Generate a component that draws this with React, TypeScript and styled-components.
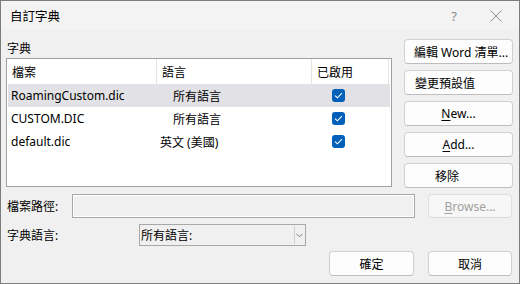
import styled, { createGlobalStyle } from 'styled-components';

const GlobalStyle = createGlobalStyle`
  html, body {
    margin: 0;
    padding: 0;
    background: #f0f0f0;
  }

  * {
    box-sizing: border-box;
  }
`;

const dictionaries = [
  { name: 'RoamingCustom.dic', language: '所有語言', indent: 16, selected: true },
  { name: 'CUSTOM.DIC', language: '所有語言', indent: 16, selected: false },
  { name: 'default.dic', language: '英文 (美國)', indent: 3, selected: false },
];

function Check() {
  return (
    <CheckBox>
      <svg width="9" height="7" viewBox="0 0 9 7">
        <path d="M1 3.6 L3.4 5.8 L8 1.2" fill="none" stroke="#fff" strokeWidth="1.1" />
      </svg>
    </CheckBox>
  );
}

function App() {
  return (
    <>
      <GlobalStyle />
      <Window>
        <TitleBar>
          <Title>自訂字典</Title>
          <TitleControls>
            <Help>?</Help>
            <svg width="12" height="12" viewBox="0 0 12 12">
              <path d="M0.5 0.5 L11.5 11.5 M11.5 0.5 L0.5 11.5" stroke="#8a8a8a" strokeWidth="1" />
            </svg>
          </TitleControls>
        </TitleBar>

        <Body>
          <Top>
            <ListColumn>
              <Label>字典</Label>
              <List>
                <HeaderRow>
                  <HeaderCell>檔案</HeaderCell>
                  <HeaderCell>語言</HeaderCell>
                  <HeaderCell>已啟用</HeaderCell>
                </HeaderRow>
                {dictionaries.map(({ name, language, indent, selected }) => (
                  <Row key={name} $selected={selected}>
                    <Cell $indent={3}>{name}</Cell>
                    <Cell $indent={indent}>{language}</Cell>
                    <CheckCell>
                      <Check />
                    </CheckCell>
                  </Row>
                ))}
              </List>
            </ListColumn>

            <SideButtons>
              <Button $align="left" $indent={9}>編輯 Word 清單...</Button>
              <Button $align="left" $indent={10}>變更預設值</Button>
              <Button>
                <u>N</u>ew...
              </Button>
              <Button>
                <u>A</u>dd...
              </Button>
              <Button $align="left" $indent={30}>移除</Button>
            </SideButtons>
          </Top>

          <PathRow>
            <Label>檔案路徑:</Label>
            <PathInput />
            <Button $disabled $width={84}>
              <u>B</u>rowse...
            </Button>
          </PathRow>

          <LanguageRow>
            <Label>字典語言:</Label>
            <Select>
              <SelectText>所有語言:</SelectText>
              <SelectArrow>
                <svg width="7" height="5" viewBox="0 0 7 5">
                  <path d="M0.5 0.8 L3.5 3.8 L6.5 0.8" fill="none" stroke="#7a7a7a" strokeWidth="1" />
                </svg>
              </SelectArrow>
            </Select>
          </LanguageRow>

          <Footer>
            <Button $width={85}>確定</Button>
            <Button $width={84}>取消</Button>
          </Footer>
        </Body>
      </Window>
    </>
  );
}

export default App;

const Window = styled.div`
  display: flex;
  flex-direction: column;
  width: 520px;
  height: 284px;
  border: 1px solid #7c7c7c;
  background-color: #f0f0f0;
  font-family: 'Noto Sans', 'Noto Sans CJK TC', sans-serif;
  font-size: 12px;
  color: #000;
`;

const TitleBar = styled.div`
  display: flex;
  align-items: center;
  justify-content: space-between;
  height: 29px;
  padding: 0 17px 0 9px;
  background-color: #f3f3f3;
`;

const Title = styled.div`
  font-size: 12.5px;
`;

const TitleControls = styled.div`
  display: flex;
  align-items: center;
  gap: 33px;
`;

const Help = styled.span`
  font-size: 13px;
  color: #8a8a8a;
`;

const Body = styled.div`
  display: flex;
  flex-direction: column;
  padding: 9px 6px 0 5px;
`;

const Top = styled.div`
  display: flex;
  gap: 12px;
`;

const ListColumn = styled.div`
  display: flex;
  flex-direction: column;
  width: 386px;
`;

const Label = styled.div`
  flex-shrink: 0;
  width: 66px;
  padding-left: 1px;
  line-height: 19px;
  white-space: nowrap;
`;

const List = styled.div`
  height: 129px;
  border: 1px solid #a0a0a0;
  background-color: #fff;
`;

const HeaderRow = styled.div`
  display: grid;
  grid-template-columns: 150px 155px 77px;
  height: 25px;
`;

const HeaderCell = styled.div`
  display: flex;
  align-items: center;
  padding-left: 5px;
  border-right: 1px solid #e5e5e5;
`;

const Row = styled.div<{ $selected?: boolean }>`
  display: grid;
  grid-template-columns: 149px 155px 77px;
  height: 23px;
  margin: 0 1px;
  background-color: ${({ $selected }) => ($selected ? '#e2e2e6' : 'transparent')};
`;

const Cell = styled.div<{ $indent: number }>`
  display: flex;
  align-items: center;
  padding-left: ${({ $indent }) => $indent}px;
  white-space: nowrap;
`;

const CheckCell = styled.div`
  display: flex;
  align-items: center;
  padding-left: 20px;
`;

const CheckBox = styled.span`
  display: flex;
  align-items: center;
  justify-content: center;
  width: 13px;
  height: 13px;
  border-radius: 3px;
  background-color: #005fb8;
`;

const SideButtons = styled.div`
  display: flex;
  flex-direction: column;
  gap: 6px;
  width: 109px;
`;

const Button = styled.div<{
  $align?: 'left' | 'center';
  $indent?: number;
  $width?: number;
  $disabled?: boolean;
}>`
  display: flex;
  align-items: center;
  justify-content: ${({ $align }) => ($align === 'left' ? 'flex-start' : 'center')};
  flex-shrink: 0;
  width: ${({ $width }) => ($width ? `${$width}px` : '100%')};
  height: 25px;
  padding-left: ${({ $indent }) => $indent ?? 0}px;
  border: 1px solid ${({ $disabled }) => ($disabled ? '#e0e0e0' : '#d0d0d0')};
  border-bottom-color: ${({ $disabled }) => ($disabled ? '#dadada' : '#bdbdbd')};
  border-radius: 4px;
  background-color: ${({ $disabled }) => ($disabled ? '#f7f7f7' : '#fdfdfd')};
  color: ${({ $disabled }) => ($disabled ? '#a0a0a0' : '#000')};
  white-space: nowrap;

  u {
    text-decoration-thickness: 1px;
    text-underline-offset: 2px;
  }
`;

const PathRow = styled.div`
  display: flex;
  align-items: center;
  height: 24px;
  margin-top: 6px;

  ${Button} {
    height: 24px;
    margin-left: 13px;
  }
`;

const PathInput = styled.div`
  width: 343px;
  height: 24px;
  border: 1px solid #a8a8a8;
  background-color: #f0f0f0;
  box-shadow: inset 0 0 0 1px #fff;
`;

const LanguageRow = styled.div`
  display: flex;
  align-items: center;
  height: 22px;
  margin-top: 6px;

  ${Label} {
    width: 133px;
  }
`;

const Select = styled.div`
  display: flex;
  align-items: center;
  justify-content: space-between;
  width: 167px;
  height: 22px;
  border: 1px solid #a8a8a8;
  background-color: #f0f0f0;
`;

const SelectText = styled.span`
  padding-left: 1px;
`;

const SelectArrow = styled.span`
  display: flex;
  align-items: center;
  justify-content: center;
  width: 10px;
  height: 18px;
  margin-right: 1px;
  border-left: 1px solid #d0d0d0;
`;

const Footer = styled.div`
  display: flex;
  justify-content: flex-end;
  gap: 14px;
  margin-top: 5px;
  padding-right: 1px;
`;
